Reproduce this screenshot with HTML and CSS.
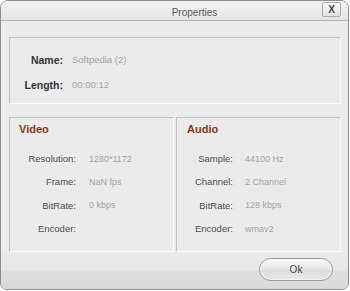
FILE: index.html
```html
<!DOCTYPE html>
<html lang="en">

<head>
    <meta charset="UTF-8">
    <meta name="viewport" content="width=device-width, initial-scale=1.0">
    <title>Properties</title>

    <link rel="stylesheet" href="styles.css">
</head>

<body>

    <div class="window">
        <div class="titlebar">
            <span class="title">Properties</span>
            <button class="close">X</button>
        </div>

        <main>
            <div class="panel info">
                <span class="label bold">Name:</span>
                <span class="value big">Softpedia (2)</span>
                <span class="label bold">Length:</span>
                <span class="value big">00:00:12</span>
            </div>

            <div class="streams">
                <div class="panel stream video">
                    <h2>Video</h2>
                    <div class="rows">
                        <span class="label">Resolution:</span>
                        <span class="value">1280*1172</span>
                        <span class="label">Frame:</span>
                        <span class="value">NaN fps</span>
                        <span class="label">BitRate:</span>
                        <span class="value">0 kbps</span>
                        <span class="label">Encoder:</span>
                        <span class="value"></span>
                    </div>
                </div>

                <div class="panel stream audio">
                    <h2>Audio</h2>
                    <div class="rows">
                        <span class="label">Sample:</span>
                        <span class="value">44100 Hz</span>
                        <span class="label">Channel:</span>
                        <span class="value">2 Channel</span>
                        <span class="label">BitRate:</span>
                        <span class="value">128 kbps</span>
                        <span class="label">Encoder:</span>
                        <span class="value">wmav2</span>
                    </div>
                </div>
            </div>
        </main>

        <div class="footer">
            <button class="ok">Ok</button>
        </div>
    </div>

</body>

</html>
```

FILE: styles.css
```css
* {
    box-sizing: border-box;
    padding: 0;
    margin: 0;
}

body {
    background: #fff;
    font-family: 'Liberation Sans', Arial, sans-serif;
    width: 350px;
    height: 291px;
    overflow: hidden;
}

.window {
    width: 349px;
    height: 290px;
    border: 1px solid #8c8c8c;
    border-radius: 8px 8px 7px 7px;
    background: #ebebeb;
    display: flex;
    flex-direction: column;
    overflow: hidden;
}

/* Title bar */
.titlebar {
    height: 20px;
    flex: none;
    display: flex;
    align-items: center;
    justify-content: center;
    position: relative;
    background: linear-gradient(#f3f3f3, #e4e4e4);
    border-bottom: 1px solid #b4b4b4;
}

.title {
    font-size: 10px;
    color: #5a5a5a;
    margin-left: 40px;
    margin-top: 3px;
}

.close {
    position: absolute;
    top: 1px;
    right: 7px;
    width: 19px;
    height: 15px;
    border: 1px solid #a9a9a9;
    border-radius: 2px;
    background: linear-gradient(#fafafa, #e2e2e2);
    font-family: 'Liberation Sans', Arial, sans-serif;
    font-weight: bold;
    font-size: 10px;
    color: #444;
    line-height: 13px;
}

/* Content */
main {
    padding: 16px 7px 0 8px;
    display: flex;
    flex-direction: column;
    gap: 13px;
}

.panel {
    border-top: 1px solid #c4c4c4;
    border-left: 1px solid #c4c4c4;
    border-bottom: 1px solid #fbfbfb;
    border-right: 1px solid #fbfbfb;
}

.label {
    font-size: 9.5px;
    color: #4c4c4c;
    text-align: right;
}

.label.bold {
    font-size: 10.5px;
    font-weight: bold;
    color: #333;
}

.value {
    font-size: 9px;
    color: #a3a3a3;
}

.value.big {
    font-size: 9.5px;
}

.info {
    height: 67px;
    padding-top: 9px;
    display: grid;
    grid-template-columns: 53px 1fr;
    grid-auto-rows: 25px;
    column-gap: 9px;
    align-items: center;
}

.streams {
    display: flex;
    gap: 2px;
}

.stream {
    width: 165px;
    height: 135px;
}

.stream h2 {
    font-size: 11px;
    color: #8e3712;
    line-height: 20px;
    padding: 1px 9px 0;
    margin-bottom: 8px;
}

.audio h2 {
    padding-left: 10px;
}

.rows {
    display: grid;
    grid-auto-rows: 23.3px;
    align-items: center;
}

.video .rows {
    grid-template-columns: 66px 1fr;
    column-gap: 13px;
}

.audio .rows {
    grid-template-columns: 56px 1fr;
    column-gap: 12px;
}

/* Footer */
.footer {
    flex: 1;
    display: flex;
    justify-content: flex-end;
    align-items: flex-start;
    padding: 6px 15px 0 0;
    background: linear-gradient(#eaeaea 0, #e6e6e6 48%, #dedede 52%, #dadada 100%);
}

.ok {
    width: 74px;
    height: 23px;
    border: 1px solid #9d9d9d;
    border-radius: 12px;
    background: linear-gradient(#fdfdfd, #e4e4e4 50%, #dcdcdc 51%, #e8e8e8);
    box-shadow: inset 0 0 0 1px #f4f4f4;
    font-family: 'Liberation Sans', Arial, sans-serif;
    font-size: 10px;
    color: #444;
}
```
